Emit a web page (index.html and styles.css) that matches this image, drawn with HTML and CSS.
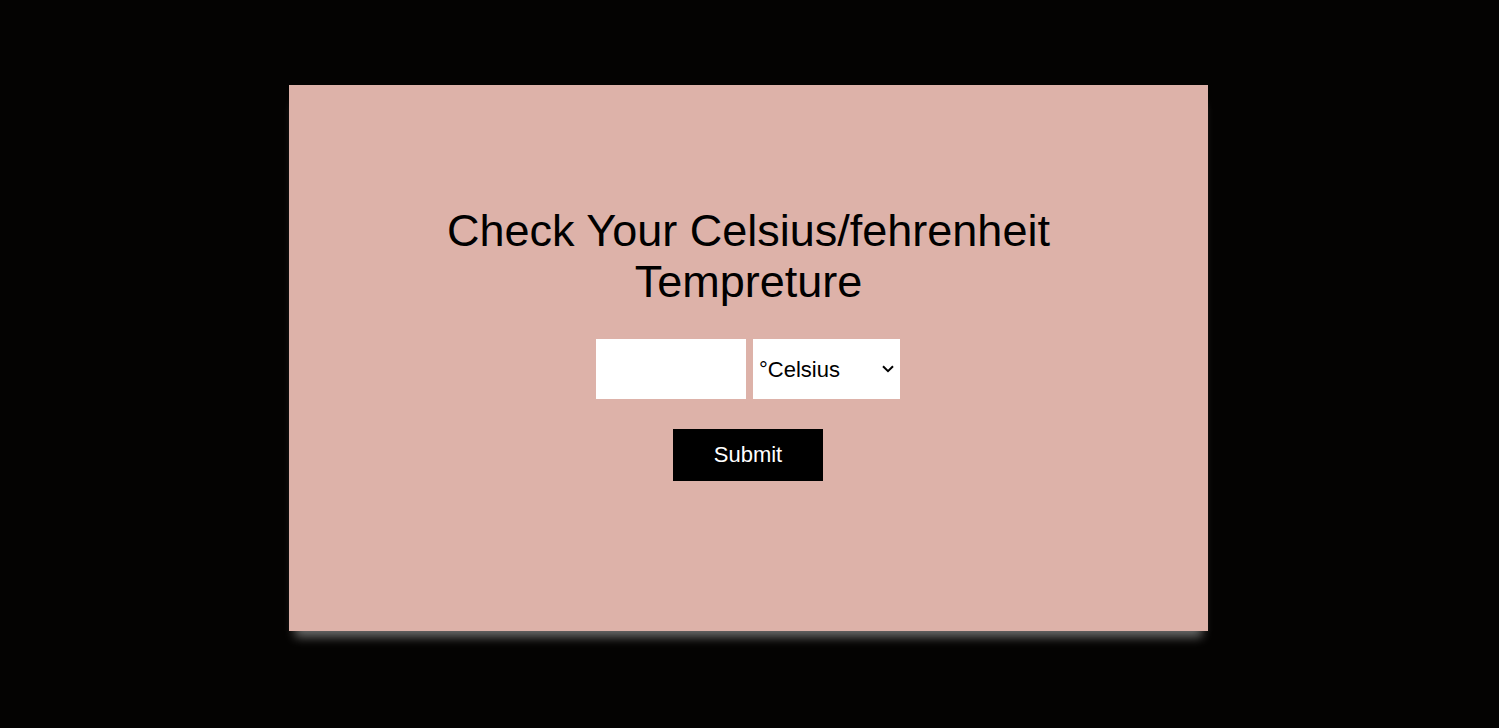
FILE: index.html
```html
<!DOCTYPE html>
<html>
<head>
<meta charset="utf-8">
<link rel="stylesheet" href="styles.css">
</head>
<body>
<div class="card">
  <h1 class="title">Check Your Celsius/fehrenheit Tempreture</h1>
  <div class="row">
    <input class="field" type="text">
    <div class="select-wrap">
      <select class="unit">
        <option>°Celsius</option>
        <option>°Fahrenheit</option>
      </select>
      <svg class="chev" width="12" height="8" viewBox="0 0 12 8"><path d="M1 1.2 L6 6.2 L11 1.2" fill="none" stroke="#000" stroke-width="2"/></svg>
    </div>
  </div>
  <button class="submit">Submit</button>
</div>
</body>
</html>
```
FILE: styles.css
```css
html, body {
  margin: 0;
  padding: 0;
  background: #040302;
  font-family: "Liberation Sans", Arial, sans-serif;
}
body {
  padding-top: 85px;
  height: 728px;
  box-sizing: border-box;
}
.card {
  width: 919px;
  height: 546px;
  margin-left: 289px;
  background: #ddb2a9;
  box-sizing: border-box;
  padding-top: 120px;
  display: flex;
  flex-direction: column;
  align-items: center;
  box-shadow: 0 12px 10px -6px rgba(255, 255, 255, 0.42);
}
.title {
  margin: 0;
  font-size: 45px;
  font-weight: normal;
  line-height: 51px;
  color: #000;
  text-align: center;
  max-width: 640px;
}
.row {
  display: flex;
  gap: 7px;
  margin-top: 32px;
  margin-right: 1px;
}
.field {
  width: 150px;
  height: 60px;
  border: none;
  outline: none;
  background: #fff;
  box-sizing: border-box;
  padding: 0 6px;
  font-size: 22px;
  font-family: inherit;
}
.select-wrap {
  position: relative;
  width: 147px;
  height: 60px;
}
.unit {
  appearance: none;
  -webkit-appearance: none;
  width: 147px;
  height: 60px;
  border: none;
  outline: none;
  background: #fff;
  box-sizing: border-box;
  font-size: 22px;
  font-family: inherit;
  color: #000;
  padding-left: 6px;
  border-radius: 0;
}
.chev {
  position: absolute;
  left: 129px;
  top: 26px;
  pointer-events: none;
}
.submit {
  margin-top: 30px;
  margin-right: 1px;
  width: 150px;
  height: 52px;
  border: none;
  background: #000;
  color: #fff;
  font-size: 22px;
  font-family: inherit;
  padding: 0;
}
```
